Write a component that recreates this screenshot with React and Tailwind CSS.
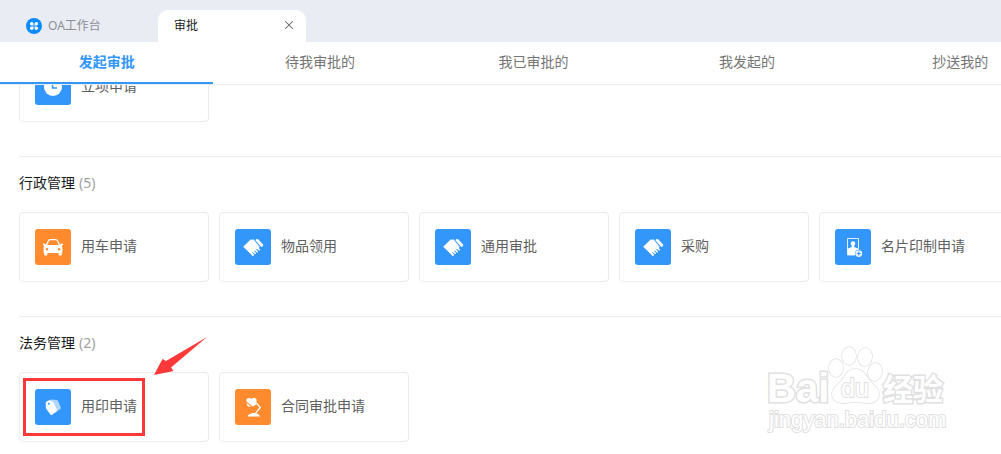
import { X } from "lucide-react";

const tabs = ["发起审批", "待我审批的", "我已审批的", "我发起的", "抄送我的"];

const sections = [
  {
    title: "行政管理",
    items: [
      { name: "用车申请", icon: CarIcon, color: "bg-[#ff8b2e]" },
      { name: "物品领用", icon: HandIcon, color: "bg-[#3296fa]" },
      { name: "通用审批", icon: HandIcon, color: "bg-[#3296fa]" },
      { name: "采购", icon: HandIcon, color: "bg-[#3296fa]" },
      { name: "名片印制申请", icon: NameCardIcon, color: "bg-[#3296fa]" },
    ],
  },
  {
    title: "法务管理",
    items: [
      { name: "用印申请", icon: TagIcon, color: "bg-[#3296fa]", marked: true },
      { name: "合同审批申请", icon: LampIcon, color: "bg-[#ff8b2e]" },
    ],
  },
];

function ClockIcon() {
  return (
    <svg viewBox="0 0 36 36" className="size-9" fill="none">
      <circle cx="18" cy="18" r="9" fill="#fff" />
      <path d="M17.5 12v7H22" stroke="#3296fa" strokeWidth="1.5" />
    </svg>
  );
}

function CarIcon() {
  return (
    <svg viewBox="0 0 36 36" className="size-9" fill="none">
      <path d="M11.3 16.5l2-4.6q.5-1.3 2-1.3h5.4q1.5 0 2 1.3l2 4.6" stroke="#fff" strokeWidth="1.3" />
      <path
        d="M8 14.8l2.2-.3.6 1.6h14.4l.6-1.6 2.2.3v1.4l-1.2.4.6 2.2v5.2h-.6v1.8q0 .6-.6.6h-2q-.6 0-.6-.6V24H12.4v1.8q0 .6-.6.6h-2q-.6 0-.6-.6V24h-.6v-5.2l.6-2.2-1.2-.4z"
        fill="#fff"
      />
      <circle cx="12" cy="20.2" r="1.2" fill="#ff8b2e" />
      <circle cx="24" cy="20.2" r="1.2" fill="#ff8b2e" />
    </svg>
  );
}

function HandIcon() {
  return (
    <svg viewBox="0 0 36 36" className="size-9" fill="none">
      <path d="M8.2 17.8l7.4-7.4 1.4.4 1.4-.5 6.4 7.6-8.2 5.7-1.4 1z" fill="#fff" />
      {/* fingers */}
      <path
        d="M20 16.5l4 4.2M18 18.5l4 4.2M16 20l4 4.4M14 21.6l4 4.4"
        stroke="#fff"
        strokeWidth="1.9"
        strokeLinecap="round"
      />
      <path d="M22.6 20.6l2 2.2M20.4 22.2l2.2 2.4M18.4 23.8l2 2.2" stroke="#3296fa" strokeWidth=".8" />
      {/* cuff */}
      <path d="M20.4 11.2l1.1-1.1 1.6.1 5.3 5.6-.5 1.4-1.7.9z" fill="#fff" />
    </svg>
  );
}

function NameCardIcon() {
  return (
    <svg viewBox="0 0 36 36" className="size-9" fill="none">
      <path d="M20 26h-7.5V9.5h11V21" stroke="#fff" strokeWidth="1" opacity=".85" />
      <circle cx="18" cy="14.6" r="2.3" fill="#fff" />
      <path d="M16.8 15h2.4v3l3.8 1.6V22l-3 4h-7.2v-6.4l4-1.6z" fill="#fff" />
      <circle cx="23.8" cy="24.6" r="3.8" fill="#3296fa" />
      <circle cx="23.8" cy="24.6" r="3.4" fill="#fff" opacity=".9" />
      <path d="M21.8 24.6h4M23.8 22.6v4" stroke="#3296fa" strokeWidth="1" />
    </svg>
  );
}

function TagIcon() {
  return (
    <svg viewBox="0 0 36 36" className="size-9" fill="none">
      <path d="M14 11.2l3-.8 4.6.6q1.4.3 1.8 1.5l2.4 6q.2 1-.5 1.6L20 24z" fill="#fff" opacity=".6" />
      <path
        d="M10.7 14.2q0-1.3 1-1.8l1.6-.9q.8-.4 1.7 0l2.4 1q.8.3 1.2 1.1l3.2 6.6q.5 1.2-.4 2l-4.2 3.5q-1 .8-1.7-.2l-4-5.3q-.5-.7-.6-1.5z"
        fill="#fff"
      />
      <circle cx="13.8" cy="14.8" r="1" fill="#3296fa" />
    </svg>
  );
}

function LampIcon() {
  return (
    <svg viewBox="0 0 36 36" className="size-9" fill="none">
      <path d="M11.2 12.2q0-3 2.9-3.1 1.4 0 2.4.7l3-1.3 2.2 2-.3 3.5 1 .9-4.8 2.7z" fill="#fff" />
      <path d="M11.6 14l4.5 3.6q-2.2.4-3.5-.7-1.2-1.1-1-2.9z" fill="#fff" />
      <path d="M21.6 14.2l3.6 4.3-4.7 5.8" stroke="#fff" strokeWidth="1.3" />
      <path d="M12.8 27.4q0-2.2 3-2.7l1.5-.8h3.6l1.2.8q2.7.5 2.7 2.7z" fill="#fff" />
    </svg>
  );
}

// Red frame and arrow drawn around the highlighted entry
function Highlight() {
  return (
    <span className="pointer-events-none absolute inset-px">
      <span className="absolute top-[5px] left-[3px] h-[58px] w-[122px] border-3 border-[#fc3838]" />
      <svg viewBox="0 0 54 40" className="absolute -top-9 left-[134px] h-10 w-[54px]" fill="#fc3838">
        <path d="M0 38L8.5 22l3.5 2L53 0 17 30.5l2.5 3.5z" />
      </svg>
    </span>
  );
}

function AppCard({ name, icon: Icon, color, marked }) {
  return (
    <li className="relative w-[190px] shrink-0">
      <button
        type="button"
        className="flex h-[70px] w-full items-center gap-2.5 rounded border border-[#ebebeb] bg-white pl-[15px] text-left text-sm text-[#606060]"
      >
        <span className={`size-9 shrink-0 rounded-[3px] ${color}`}>
          <Icon />
        </span>
        <span className="pb-0.5">{name}</span>
      </button>
      {marked && <Highlight />}
    </li>
  );
}

function Watermark() {
  return (
    <svg
      viewBox="0 0 190 96"
      className="pointer-events-none absolute right-[46px] bottom-[18px] h-24 w-[190px]"
      fill="#fff"
      stroke="#e0e0e0"
      strokeWidth="1.5"
      paintOrder="stroke"
      fontFamily="Liberation Sans, Noto Sans CJK SC, sans-serif"
    >
      <text x="2" y="62" fontSize="40" fontWeight="700" strokeWidth="3">Bai</text>
      <ellipse cx="71" cy="28" rx="7" ry="9" />
      <ellipse cx="84" cy="16" rx="7" ry="9" />
      <ellipse cx="100" cy="17" rx="7" ry="9" transform="rotate(8 100 17)" />
      <ellipse cx="110" cy="32" rx="7" ry="9" transform="rotate(12 110 32)" />
      <path d="M90 29c9 0 11 7 15 12s9 7 9 13-4 9-10 9c-5 0-9-1-14-1s-8 1-13 1c-6 0-10-4-10-9 0-6 5-8 9-13s6-12 14-12z" />
      <text x="76" y="57" fontSize="25" strokeWidth="2">du</text>
      <text x="118" y="60" fontSize="30" fontWeight="700" strokeWidth="3">经验</text>
      <text x="4" y="87" fontSize="22" strokeWidth="2">jingyan.baidu.com</text>
    </svg>
  );
}

export default function App() {
  return (
    <div className="relative h-screen overflow-hidden bg-white font-['Noto_Sans','Noto_Sans_CJK_SC',sans-serif]">
      <header className="relative z-10 bg-white">
        <div className="flex h-[42px] items-end bg-[#e9ecf3] pl-[26px] text-xs">
          <button type="button" className="flex h-8 w-[132px] items-center gap-1.5 text-[#8c8f96]">
            <svg viewBox="0 0 16 16" className="size-4" fill="#fff">
              <circle cx="8" cy="8" r="8" fill="#0a8cff" />
              <path d="M7.5 7.5H5.8a1.8 1.8 0 1 1 1.7-1.8zM8.5 7.5V5.7a1.8 1.8 0 1 1 1.8 1.8zM7.5 8.5v1.8a1.8 1.8 0 1 1-1.8-1.8zM8.5 8.5h1.8a1.8 1.8 0 1 1-1.8 1.8z" />
            </svg>
            OA工作台
          </button>
          <div className="flex h-8 w-[148px] items-center justify-between rounded-t-[10px] bg-white pr-2.5 pl-4 text-[#171a1d]">
            <span>审批</span>
            <button type="button" aria-label="关闭" className="pb-0.5 text-[#666]">
              <X className="size-3.5" strokeWidth={1.75} />
            </button>
          </div>
        </div>
        <nav className="overflow-hidden border-b border-[#ebebeb]">
          <div className="grid min-w-[1067px] grid-cols-5 text-sm">
            {tabs.map((tab, i) => (
              <a
                key={tab}
                href="#"
                className={
                  i === 0
                    ? "flex h-[42px] items-center justify-center border-b-2 border-[#3296fa] font-bold text-[#3296fa]"
                    : "flex h-[42px] items-center justify-center border-b-2 border-transparent text-[#757575]"
                }
              >
                {tab}
              </a>
            ))}
          </div>
        </nav>
      </header>

      {/* pulled up under the header, as the list is scrolled */}
      <main className="-mt-[33px] pl-[19px]">
        <ul className="mb-[34px] flex gap-2.5">
          <AppCard name="立项申请" icon={ClockIcon} color="bg-[#3296fa]" />
        </ul>
        {sections.map((section) => (
          <section key={section.title} className="mb-[34px] border-t border-[#ebebeb]">
            <h2 className="flex h-[55px] items-center gap-1 pb-1 text-sm text-[#171a1d]">
              {section.title}
              <span className="text-[#a0a0a0]">({section.items.length})</span>
            </h2>
            <ul className="flex gap-2.5">
              {section.items.map((item) => (
                <AppCard key={item.name} {...item} />
              ))}
            </ul>
          </section>
        ))}
      </main>

      <Watermark />
    </div>
  );
}
